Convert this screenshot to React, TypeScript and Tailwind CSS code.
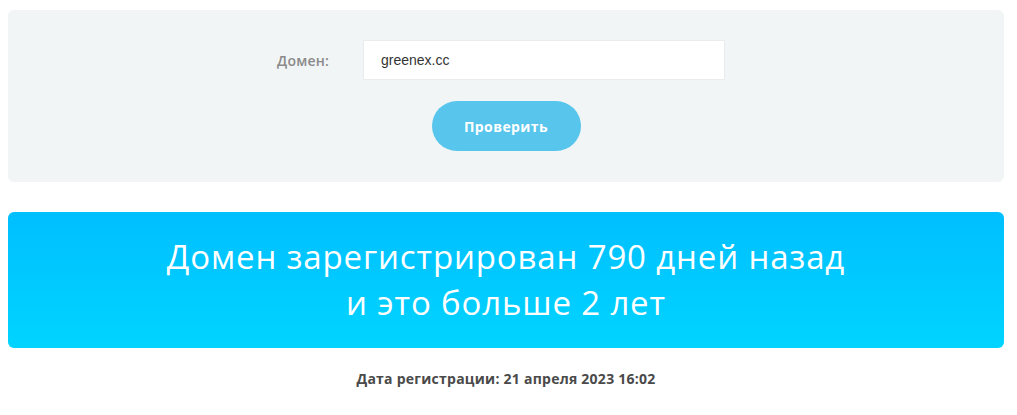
export default function App() {
  return (
    <div className="w-[1017px] h-[415px] bg-white pl-2 pt-[10px] font-['Open_Sans',sans-serif]">
      {/* Search form */}
      <div className="h-[172px] w-[996px] rounded-md bg-[#f2f5f6] pt-[30px]">
        <div className="flex items-center">
          <label className="w-[321px] text-right text-[14px] font-semibold tracking-[0.2px] text-[#8a8a8a]">
            Домен:
          </label>
          <input
            readOnly
            value="greenex.cc"
            className="ml-[34px] h-10 w-[362px] border border-[#e8ecee] bg-white px-[17px] font-['Liberation_Sans',sans-serif] text-[14px] text-[#333] outline-none"
          />
        </div>
        <div className="mt-[21px] flex justify-center">
          <button className="h-[50px] w-[149px] rounded-full bg-[#57c5ec] text-[14px] font-bold tracking-[0.4px] text-white">
            Проверить
          </button>
        </div>
      </div>

      {/* Result */}
      <div className="mt-[30px] flex h-[136px] w-[996px] flex-col items-center justify-center rounded-md bg-gradient-to-b from-[#00bfff] to-[#00d4ff] text-[33px] leading-[46px] font-normal tracking-[0.85px] text-white">
        <p>Домен зарегистрирован 790 дней назад</p>
        <p>и это больше 2 лет</p>
      </div>

      <p className="mt-[20px] w-[996px] text-center text-[14px] font-bold tracking-[0.25px] text-[#4a4a4a]">
        Дата регистрации: 21 апреля 2023 16:02
      </p>
    </div>
  );
}
